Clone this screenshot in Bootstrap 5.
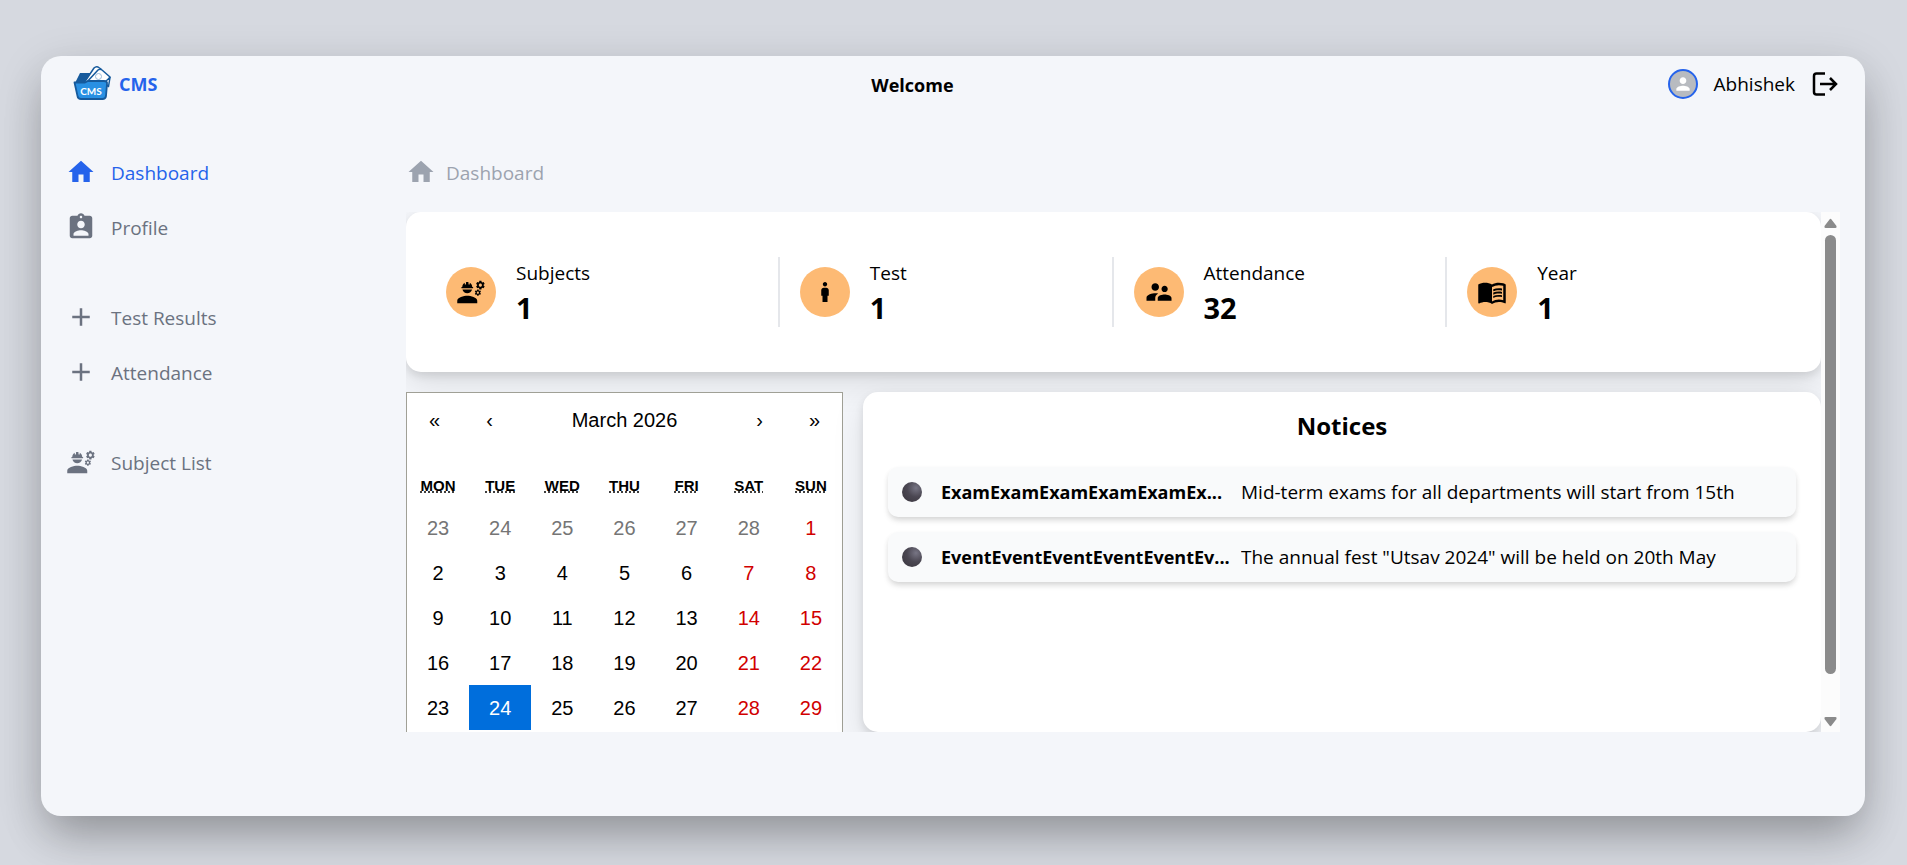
<!DOCTYPE html>
<html lang="en">
<head>
<meta charset="utf-8">
<meta name="viewport" content="width=device-width, initial-scale=1">
<title>CMS - Dashboard</title>
<link href="https://cdn.jsdelivr.net/npm/bootstrap@5.3.0/dist/css/bootstrap.min.css" rel="stylesheet">
<style>
  :root { --brand: #2563eb; --muted: #6b7280; --surface: #f4f6fa; }
  body { background: #d6d9e0; font: 19px/30px "Open Sans", "Noto Sans", sans-serif; color: #000; padding: 56px 42px 49px 41px; }
  svg { fill: currentColor; flex: none; }
  .ico { width: 30px; height: 30px; }
  .shell { background: var(--surface); border-radius: 20px; min-height: calc(100vh - 105px);
    box-shadow: 0 25px 45px -8px rgba(0,0,0,.24), 0 12px 48px rgba(0,0,0,.14); }
  .topbar { height: 56px; padding: 0 26px 0 31px; }
  .brand-link { color: var(--brand); font-size: 18px; gap: 7px; }
  .welcome { font-size: 18px; line-height: 30px; padding-top: 2px; }
  .avatar { width: 30px; height: 30px; border: 2px solid var(--brand); background: #b8bbc0; color: #fff; }
  .icon-btn { border: 0; background: none; padding: 0; color: #000; }
  .side { width: 340px; flex: none; padding: 0 25px; }
  .side a { color: var(--muted); height: 55px; gap: 15px; }
  .side a.active { color: var(--brand); }
  .side ul + ul { margin-top: 35px; }
  .main-col { min-width: 0; padding: 0 25px; }
  .crumb { color: #9ca3af; height: 55px; gap: 10px; margin-bottom: 13px; }
  .side span, .crumb span { padding-top: 2px; }
  .viewport { height: 520px; overflow: hidden; }
  .scroll-body { min-width: 0; overflow: hidden; }
  .panel { background: #fff; border-radius: 15px; box-shadow: 0 4px 8px rgba(0,0,0,.1), 0 12px 32px rgba(0,0,0,.1); }
  .stats { display: grid; grid-template-columns: repeat(4, 1fr); padding: 45px 40px; margin-bottom: 20px; }
  .stat { height: 70px; gap: 20px; padding-left: 20px; border-right: 2px solid #e5e7eb; }
  .stat:first-child { padding-left: 0; }
  .stat:last-child { border: 0; }
  .disc { width: 50px; height: 50px; background: #fdba74; }
  .stat-num { font-size: 29px; line-height: 40px; }
  .stat-text { padding-top: 2px; }
  .lower { gap: 20px; }
  .cal { width: 437px; height: 360px; flex: none; background: #fff; border: 1px solid #a0a096; font-family: "Liberation Sans", Arial, sans-serif; font-size: 20px; }
  .cal-nav { height: 54px; margin-bottom: 20px; }
  .cal-nav button { width: 55px; border: 0; background: none; padding: 0; color: #000; }
  .cal table { width: 100%; table-layout: fixed; border-collapse: collapse; text-align: center; }
  .cal th { font-size: 15px; line-height: 22px; height: 38px; padding: 0; }
  .cal abbr { text-decoration: underline dotted; cursor: inherit; }
  .cal td { height: 45px; padding: 0; }
  .cal .weekend { color: #d10000; }
  .cal .other { color: #757575; }
  .cal .today { background: #006edc; color: #fff; }
  .notices { min-width: 0; height: 340px; padding: 16px 25px; }
  .notices h2 { font-size: 24px; line-height: 36px; margin-bottom: 23px; }
  .notice { background: #f9fafb; height: 50px; border-radius: 10px; padding: 0 14px; margin-bottom: 15px;
    box-shadow: 0 4px 6px -1px rgba(0,0,0,.14), 0 2px 6px -1px rgba(0,0,0,.06); }
  .moon { width: 20px; height: 20px; flex: none; margin-right: 19px; background: radial-gradient(circle at 70% 30%, #777584, #4b4752 45%, #38343c); }
  .notice strong { width: 300px; flex: none; font-size: 18px; white-space: nowrap; }
  .bar { width: 19px; flex: none; background: #fcfcfc; color: #8b8b8b; }
  .bar-track { flex: 1; width: 11px; }
  .bar-thumb { height: 92%; border-radius: 6px; background: #8b8b8b; }
</style>
</head>
<body>
<svg class="d-none" aria-hidden="true">
  <symbol id="home" viewBox="0 0 24 24"><path d="M10 20v-6h4v6h5v-8h3L12 3 2 12h3v8z"/></symbol>
  <symbol id="plus" viewBox="0 0 24 24"><path d="M19 13h-6v6h-2v-6H5v-2h6V5h2v6h6v2z"/></symbol>
  <symbol id="badge-id" viewBox="0 0 24 24"><path d="M19 3h-4.18C14.4 1.84 13.3 1 12 1c-1.3 0-2.4.84-2.82 2H5c-1.1 0-2 .9-2 2v14c0 1.1.9 2 2 2h14c1.1 0 2-.9 2-2V5c0-1.1-.9-2-2-2zm-7 0c.55 0 1 .45 1 1s-.45 1-1 1-1-.45-1-1 .45-1 1-1zm0 4c1.66 0 3 1.34 3 3s-1.34 3-3 3-3-1.34-3-3 1.34-3 3-3zm6 12H6v-1.4c0-2 4-3.1 6-3.1s6 1.1 6 3.1V19z"/></symbol>
  <symbol id="engineer" viewBox="0 0 24 24"><path d="M9 15c-2.67 0-8 1.34-8 4v2h16v-2c0-2.66-5.33-4-8-4zM22.1 6.84c.01-.11.02-.22.02-.34 0-.12-.01-.23-.03-.34l.74-.58c.07-.05.08-.15.04-.22l-.7-1.21c-.04-.08-.14-.1-.21-.08l-.86.35c-.18-.14-.38-.25-.59-.34l-.13-.93c-.02-.09-.09-.15-.18-.15h-1.4c-.09 0-.16.06-.17.15l-.13.93c-.21.09-.41.21-.59.34l-.87-.35c-.08-.03-.17 0-.21.08l-.7 1.21c-.04.08-.03.17.04.22l.74.58c-.02.11-.03.23-.03.34 0 .11.01.23.03.34l-.74.58c-.07.05-.08.15-.04.22l.7 1.21c.04.08.14.1.21.08l.87-.35c.18.14.38.25.59.34l.13.93c.01.09.08.15.17.15h1.4c.09 0 .16-.06.17-.15l.13-.93c.21-.09.41-.21.59-.34l.87.35c.08.03.17 0 .21-.08l.7-1.21c.04-.08.03-.17-.04-.22l-.73-.58zm-2.6.91c-.69 0-1.25-.56-1.25-1.25s.56-1.25 1.25-1.25 1.25.56 1.25 1.25-.56 1.25-1.25 1.25zM19.92 11.68l-.5-.87c-.03-.06-.1-.08-.15-.06l-.62.25c-.13-.1-.27-.18-.42-.24l-.09-.66c-.02-.06-.08-.1-.14-.1h-1c-.06 0-.11.04-.12.11l-.09.66c-.15.06-.29.15-.42.24l-.62-.25c-.06-.02-.12 0-.15.06l-.5.87c-.03.06-.02.12.03.16l.53.41c-.01.08-.02.16-.02.24s.01.17.02.24l-.53.41c-.05.04-.06.11-.03.16l.5.87c.03.06.1.08.15.06l.62-.25c.13.1.27.18.42.24l.09.66c.01.07.06.11.12.11h1c.06 0 .12-.04.12-.11l.09-.66c.15-.06.29-.15.42-.24l.62.25c.06.02.12 0 .15-.06l.5-.87c.03-.06.02-.12-.03-.16l-.52-.41c.01-.08.02-.16.02-.24s-.01-.17-.02-.24l.53-.41c.05-.04.06-.11.04-.16zm-2.42 1.65c-.46 0-.83-.38-.83-.83 0-.46.38-.83.83-.83s.83.38.83.83c0 .46-.37.83-.83.83zM4.74 9h8.53c.27 0 .49-.22.49-.49v-.02c0-.27-.22-.49-.49-.49H13c0-1.48-.81-2.75-2-3.45v.95c0 .28-.22.5-.5.5s-.5-.22-.5-.5V4.14C9.68 4.06 9.35 4 9 4s-.68.06-1 .14V5.5c0 .28-.22.5-.5.5S7 5.78 7 5.5v-.95C5.81 5.25 5 6.52 5 8h-.26c-.27 0-.49.22-.49.49v.03c0 .26.22.48.49.48zM9 13c1.86 0 3.41-1.28 3.86-3H5.14c.45 1.72 2 3 3.86 3z"/></symbol>
  <symbol id="boy" viewBox="0 0 24 24"><path d="M12 7.5c.97 0 1.75-.78 1.75-1.75S12.97 4 12 4s-1.75.78-1.75 1.75S11.03 7.5 12 7.5zM14 20v-5h1v-4.500c0-1.100-.9-2-2-2h-2c-1.100 0-2 .9-2 2V15h1v5h4z"/></symbol>
  <symbol id="people" viewBox="0 0 24 24"><path d="M16.500 12c1.380 0 2.490-1.120 2.490-2.500S17.880 7 16.500 7 14 8.120 14 9.500s1.120 2.500 2.500 2.500zM9 11c1.660 0 2.990-1.340 2.990-3S10.660 5 9 5 6 6.340 6 8s1.340 3 3 3zm7.500 3c-1.830 0-5.500.92-5.500 2.750V19h11v-2.250c0-1.830-3.670-2.750-5.500-2.750zM9 13c-2.330 0-7 1.170-7 3.500V19h7v-2.250c0-.85.33-2.340 2.370-3.470C10.500 13.100 9.660 13 9 13z"/></symbol>
  <symbol id="book" viewBox="0 0 24 24"><path d="M21 5c-1.11-.35-2.33-.5-3.5-.5-1.95 0-4.05.4-5.5 1.5-1.45-1.1-3.55-1.5-5.5-1.5S2.45 4.9 1 6v14.65c0 .25.25.5.5.5.1 0 .15-.05.25-.05C3.1 20.45 5.05 20 6.5 20c1.95 0 4.05.4 5.5 1.5 1.35-.85 3.8-1.5 5.5-1.5 1.65 0 3.35.3 4.75 1.05.1.05.15.05.25.05.25 0 .5-.25.5-.5V6c-.6-.45-1.25-.75-2-1zm0 13.5c-1.1-.35-2.3-.5-3.5-.5-1.7 0-4.15.65-5.5 1.5V8c1.35-.85 3.8-1.5 5.5-1.5 1.2 0 2.4.15 3.500.5v11.500z"/><path d="M17.500 10.500c.88 0 1.730.09 2.500.26V9.240c-.79-.15-1.640-.24-2.500-.24-1.700 0-3.240.29-4.500.83v1.660c1.130-.64 2.700-.99 4.500-.99zM13 12.490v1.660c1.130-.64 2.700-.99 4.500-.99.88 0 1.730.09 2.500.26V11.900c-.79-.15-1.640-.24-2.500-.24-1.700 0-3.240.3-4.500.83zM17.500 14.330c-1.700 0-3.240.29-4.500.83v1.660c1.130-.64 2.700-.99 4.500-.99.88 0 1.730.09 2.500.26v-1.520c-.79-.16-1.640-.24-2.500-.24z"/></symbol>
</svg>

<div class="shell">
  <header class="topbar d-flex align-items-center justify-content-between">
    <a href="#" class="brand-link d-flex align-items-center text-decoration-none fw-bold">
      <svg width="40" height="40" viewBox="0 0 40 40" stroke-linejoin="round">
        <path d="M3 19 8 9h10l3 3h12v10H4z" fill="#165a9c"/>
        <path d="M12 19 22 4q2-2 4-1l3 2-7 15z" fill="#fff" stroke="#165a9c" stroke-width="1.500"/>
        <path d="M14 19 26 6q2-1.500 4 0l8 7-5 8-18 1z" fill="#fff" stroke="#165a9c" stroke-width="1.500"/>
        <circle cx="26.500" cy="12.500" r="3" fill="none" stroke="#9cbbd9"/>
        <path d="M38 13.500l-4 3.500q-1.500 3 2.500 5.500z" fill="#fff" stroke="#165a9c" stroke-width="1.500"/>
        <path d="M2.500 18.500H13l3-1.500h16q3.500 0 3 3l-1 12q-.5 3-3.500 3H9q-3 0-3.500-3z" fill="#2990e3" stroke="#165a9c" stroke-width="1.800"/>
        <text x="19" y="31" fill="#fff" font-family="Lato, sans-serif" font-size="10" font-weight="700" text-anchor="middle">CMS</text>
      </svg>
      CMS
    </a>
    <h1 class="welcome fw-bold m-0">Welcome</h1>
    <div class="d-flex align-items-center">
      <span class="avatar rounded-circle d-flex align-items-center justify-content-center me-3">
        <svg width="20" height="20" viewBox="0 0 24 24"><path d="M12 12c2.210 0 4-1.790 4-4s-1.790-4-4-4-4 1.790-4 4 1.790 4 4 4zm0 2c-2.670 0-8 1.340-8 4v2h16v-2c0-2.660-5.330-4-8-4z"/></svg>
      </span>
      <span class="me-3">Abhishek</span>
      <button class="icon-btn d-flex" type="button" aria-label="Log out">
        <svg width="28" height="26" viewBox="0 0 28 26"><path d="M14 2.500H5.500Q3 2.500 3 5v16q0 2.500 2.500 2.500H14M9 13h16M19 7l6 6-6 6" fill="none" stroke="#000" stroke-width="2.500"/></svg>
      </button>
    </div>
  </header>

  <div class="d-flex pt-4 mt-2">
    <nav class="side" aria-label="Main">
      <ul class="list-unstyled mb-0">
        <li><a href="#" class="active d-flex align-items-center text-decoration-none" aria-current="page"><svg class="ico"><use href="#home"/></svg><span>Dashboard</span></a></li>
        <li><a href="#" class="d-flex align-items-center text-decoration-none"><svg class="ico"><use href="#badge-id"/></svg><span>Profile</span></a></li>
      </ul>
      <ul class="list-unstyled mb-0">
        <li><a href="#" class="d-flex align-items-center text-decoration-none"><svg class="ico"><use href="#plus"/></svg><span>Test Results</span></a></li>
        <li><a href="#" class="d-flex align-items-center text-decoration-none"><svg class="ico"><use href="#plus"/></svg><span>Attendance</span></a></li>
      </ul>
      <ul class="list-unstyled mb-0">
        <li><a href="#" class="d-flex align-items-center text-decoration-none"><svg class="ico"><use href="#engineer"/></svg><span>Subject List</span></a></li>
      </ul>
    </nav>

    <main class="main-col flex-grow-1">
      <div class="crumb d-flex align-items-center"><svg class="ico"><use href="#home"/></svg><span>Dashboard</span></div>
      <div class="viewport d-flex">
        <div class="scroll-body flex-grow-1">
          <section class="panel stats">
            <div class="stat d-flex align-items-center"><span class="disc rounded-circle d-flex align-items-center justify-content-center"><svg class="ico"><use href="#engineer"/></svg></span><div class="stat-text">Subjects<div class="stat-num fw-bold">1</div></div></div>
            <div class="stat d-flex align-items-center"><span class="disc rounded-circle d-flex align-items-center justify-content-center"><svg class="ico"><use href="#boy"/></svg></span><div class="stat-text">Test<div class="stat-num fw-bold">1</div></div></div>
            <div class="stat d-flex align-items-center"><span class="disc rounded-circle d-flex align-items-center justify-content-center"><svg class="ico"><use href="#people"/></svg></span><div class="stat-text">Attendance<div class="stat-num fw-bold">32</div></div></div>
            <div class="stat d-flex align-items-center"><span class="disc rounded-circle d-flex align-items-center justify-content-center"><svg class="ico"><use href="#book"/></svg></span><div class="stat-text">Year<div class="stat-num fw-bold">1</div></div></div>
          </section>
          <div class="lower d-flex align-items-start">
            <section class="cal" aria-label="Calendar">
              <div class="cal-nav d-flex">
                <button type="button" aria-label="Previous year">«</button>
                <button type="button" aria-label="Previous month">‹</button>
                <button type="button" class="flex-grow-1">March 2026</button>
                <button type="button" aria-label="Next month">›</button>
                <button type="button" aria-label="Next year">»</button>
              </div>
              <table>
                <thead><tr><th><abbr title="Monday">MON</abbr></th><th><abbr title="Tuesday">TUE</abbr></th><th><abbr title="Wednesday">WED</abbr></th><th><abbr title="Thursday">THU</abbr></th><th><abbr title="Friday">FRI</abbr></th><th><abbr title="Saturday">SAT</abbr></th><th><abbr title="Sunday">SUN</abbr></th></tr></thead>
                <tbody>
                  <tr><td class="other">23</td><td class="other">24</td><td class="other">25</td><td class="other">26</td><td class="other">27</td><td class="other">28</td><td class="weekend">1</td></tr>
                  <tr><td>2</td><td>3</td><td>4</td><td>5</td><td>6</td><td class="weekend">7</td><td class="weekend">8</td></tr>
                  <tr><td>9</td><td>10</td><td>11</td><td>12</td><td>13</td><td class="weekend">14</td><td class="weekend">15</td></tr>
                  <tr><td>16</td><td>17</td><td>18</td><td>19</td><td>20</td><td class="weekend">21</td><td class="weekend">22</td></tr>
                  <tr><td>23</td><td class="today">24</td><td>25</td><td>26</td><td>27</td><td class="weekend">28</td><td class="weekend">29</td></tr>
                </tbody>
              </table>
            </section>
            <section class="panel notices flex-grow-1">
              <h2 class="fw-bold text-center">Notices</h2>
              <div class="notice d-flex align-items-center"><span class="moon rounded-circle"></span><strong>ExamExamExamExamExamEx...</strong><span class="text-truncate">Mid-term exams for all departments will start from 15th</span></div>
              <div class="notice d-flex align-items-center"><span class="moon rounded-circle"></span><strong>EventEventEventEventEventEv...</strong><span class="text-truncate">The annual fest "Utsav 2024" will be held on 20th May</span></div>
            </section>
          </div>
        </div>
        <div class="bar d-flex flex-column align-items-center justify-content-between py-1" aria-hidden="true">
          <svg width="13" height="19" viewBox="0 0 13 19"><path d="M5.500 3.500q1-1.500 2 0L12.500 10q.5 2-1 2h-10q-1.500 0-1-2z"/></svg>
          <div class="bar-track"><div class="bar-thumb"></div></div>
          <svg width="13" height="16" viewBox="0 0 13 16"><path d="M5.500 13.500q1 1.500 2 0L12.500 7q.5-2-1-2h-10Q0 5 .5 7z"/></svg>
        </div>
      </div>
    </main>
  </div>
</div>
<script src="https://cdn.jsdelivr.net/npm/bootstrap@5.3.0/dist/js/bootstrap.bundle.min.js"></script>
</body>
</html>
